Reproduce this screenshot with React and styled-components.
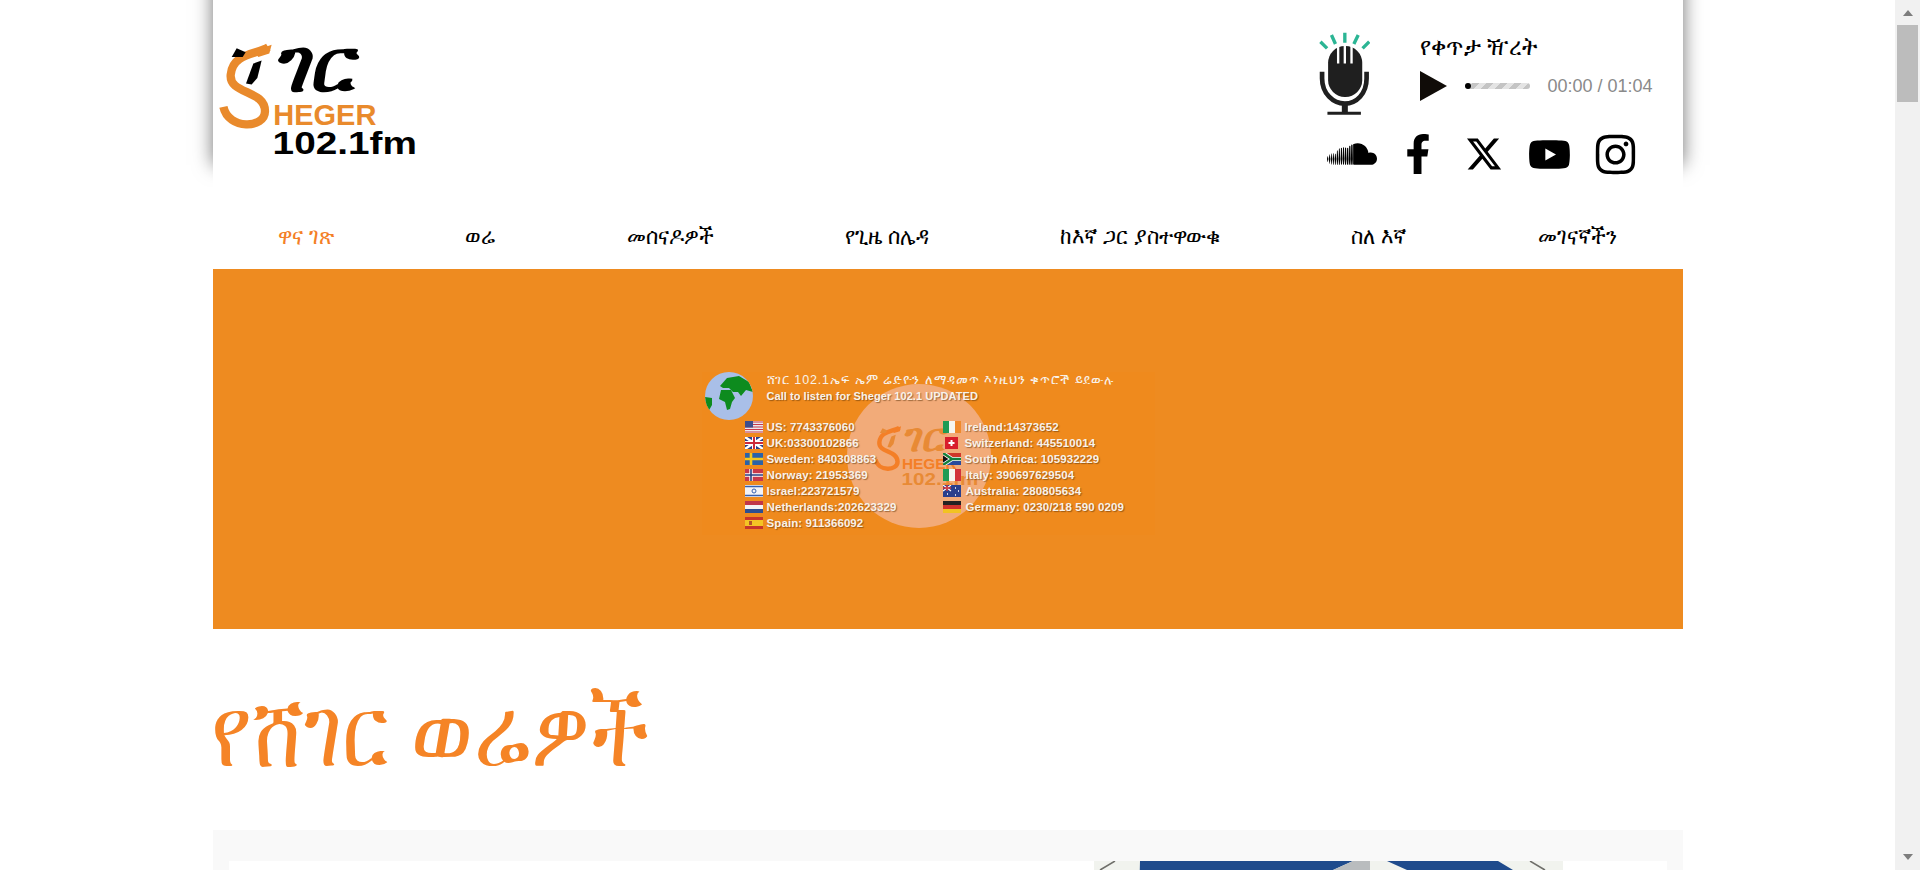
import React from "react";
import styled, { createGlobalStyle } from "styled-components";
import { FaFacebookF, FaSoundcloud, FaYoutube, FaInstagram } from "react-icons/fa";
import { FaXTwitter } from "react-icons/fa6";

const ORANGE = "#f47f27";
const LOGO_ORANGE = "#e98a2c";

const GlobalStyle = createGlobalStyle`
  body {
    margin: 0;
    padding-right: 25px;
    background: #fff;
    color: #000;
    font-family: "Liberation Sans", Arial, sans-serif;
  }
`;

const Page = styled.div`
  width: 1470px;
  margin: 0 auto;
`;

const Header = styled.header`
  position: relative;
  height: 190px;
  display: flex;
  justify-content: space-between;
  background: #fff;
  box-shadow: 0 -25px 18px rgba(0, 0, 0, 0.55);
`;

const LogoBox = styled.div`
  padding-top: 33px;
  svg {
    display: block;
    overflow: visible;
  }
`;

const HeaderRight = styled.div`
  width: 365px;
  padding-top: 30px;
`;

const PlayerRow = styled.div`
  display: flex;
  gap: 50px;
`;

const Player = styled.div`
  display: flex;
  flex-direction: column;
`;

const LiveTitle = styled.div`
  font-size: 23px;
  line-height: 30px;
  margin-top: 1px;
  transform: scaleY(1.1);
  transform-origin: left center;
`;

const Controls = styled.div`
  display: flex;
  align-items: center;
  height: 32px;
  margin-top: 9px;
`;

const PlayIcon = styled.svg`
  width: 27px;
  height: 30px;
  fill: #100c08;
`;

const Track = styled.div`
  position: relative;
  width: 65px;
  height: 6px;
  margin-left: 18px;
  border-radius: 3px;
  background: repeating-linear-gradient(
    -45deg,
    #c4c4c4 0 5px,
    #e4e4e4 5px 10px
  );
`;

const Knob = styled.span`
  position: absolute;
  left: 0;
  top: 0;
  width: 6px;
  height: 6px;
  border-radius: 50%;
  background: #000;
`;

const Time = styled.span`
  margin-left: 18px;
  font-size: 18px;
  color: #8a8a8a;
  white-space: nowrap;
`;

const Socials = styled.div`
  display: flex;
  margin: 15px 0 0 1px;
`;

const SocialCell = styled.a`
  width: 66px;
  height: 44px;
  display: flex;
  align-items: center;
  justify-content: center;
  color: #000;
`;

const Nav = styled.nav`
  position: relative;
  height: 79px;
  padding-top: 13px;
  box-sizing: border-box;
  display: flex;
  justify-content: space-around;
  align-items: center;
  background: #fff;
`;

const NavLink = styled.a`
  display: inline-block;
  font-size: 21.3px;
  color: ${(p) => (p.$active ? ORANGE : "#000")};
  transform: scaleY(1.1);
`;

const Banner = styled.section`
  height: 360px;
  padding: 9px 39px 0 0;
  box-sizing: border-box;
  display: flex;
  align-items: center;
  justify-content: center;
  background: #ee8b20;
`;

const Poster = styled.div`
  position: relative;
  width: 453px;
  height: 163px;
  background: #ef8a1d;
  color: #f8f2ea;
`;

const Disc = styled.div`
  position: absolute;
  left: 145px;
  top: 12px;
  width: 144px;
  height: 144px;
  border-radius: 50%;
  background: #f2ab79;
`;

const Watermark = styled.div`
  position: absolute;
  left: 168px;
  top: 48px;
  svg {
    overflow: visible;
  }
`;

const PosterHead = styled.div`
  position: relative;
  display: flex;
  gap: 14px;
  padding-left: 3px;
  height: 47px;
`;

const PosterTitles = styled.div`
  padding-top: 1px;
`;

const PosterTitle = styled.div`
  font-size: 12.5px;
  line-height: 15px;
  letter-spacing: 0.85px;
  white-space: nowrap;
`;

const PosterSub = styled.div`
  font-size: 11px;
  line-height: 16px;
  font-weight: 700;
  letter-spacing: 0.05px;
  white-space: nowrap;
  text-shadow: 1px 1px 1px rgba(90, 50, 10, 0.55);
`;

const Numbers = styled.div`
  position: relative;
  display: grid;
  grid-template-columns: 198px 1fr;
  padding-left: 43px;
`;

const NumberRow = styled.div`
  display: flex;
  align-items: center;
  height: 16px;
  font-size: 11.5px;
  font-weight: 700;
  letter-spacing: 0.1px;
  white-space: nowrap;
  text-shadow: 1px 1px 1px rgba(90, 50, 10, 0.55);
  svg {
    flex: none;
    margin-right: ${(p) => (p.$wide ? 5 : 4)}px;
  }
`;

const Heading = styled.h1`
  margin: 0;
  height: 201px;
  padding: 35px 0 0 0;
  box-sizing: border-box;
  font-size: 83.5px;
  line-height: 100px;
  font-weight: 400;
  color: #f58426;
  transform: scaleY(1.2);
  transform-origin: left top;
  text-indent: -2px;
`;

const NewsPanel = styled.section`
  padding: 31px 16px 16px;
  background: #f9f9f9;
`;

const NewsCard = styled.article`
  height: 320px;
  display: flex;
  justify-content: flex-end;
  padding-right: 97px;
  background: #fff;
  svg {
    display: block;
  }
`;

const Scrollbar = styled.div`
  position: fixed;
  top: 0;
  right: 0;
  bottom: 0;
  width: 25px;
  display: flex;
  flex-direction: column;
  justify-content: space-between;
  align-items: center;
  background: #f1f1f1;
`;

const ScrollArrow = styled.div`
  width: 0;
  height: 0;
  margin: 10px 0;
  border-left: 5.5px solid transparent;
  border-right: 5.5px solid transparent;
  ${(p) => (p.$down ? "border-top" : "border-bottom")}: 6px solid #7d7d7d;
`;

const ScrollThumb = styled.div`
  width: 21px;
  height: 77px;
  margin-top: -1px;
  background: #bcbcbc;
`;

const ScrollTop = styled.div`
  display: flex;
  flex-direction: column;
  align-items: center;
`;

function Logo({ width = 213, height = 133, accent = LOGO_ORANGE, ink = "#000" }) {
  return (
    <svg width={width} height={height} viewBox="39 100 640 400">
      <path
        d="M205 143C170 165 98 160 92 225C86 285 195 270 195 335C195 388 85 392 70 322"
        fill="none"
        stroke={accent}
        strokeWidth="25"
      />
      <path d="M160 155L215 135L208 162L175 172Z" fill={accent} />
      <path d="M95 172L110 146L137 158L128 172Z" fill={ink} />
      <path d="M138 252L160 192L185 183L172 235L155 255Z" fill={ink} />
      <g transform="translate(218 275) skewX(-10) scale(1 1.5)">
        <text fontSize="150" fontWeight="700" fontFamily="'Liberation Sans', sans-serif" fill={ink} textLength="240" lengthAdjust="spacingAndGlyphs">
          ገር
        </text>
      </g>
      <text x="220" y="378" fontSize="88" fontWeight="700" fontFamily="'Liberation Sans', sans-serif" fill={accent} textLength="310" lengthAdjust="spacingAndGlyphs">
        HEGER
      </text>
      <text x="218" y="465" fontSize="96" fontWeight="700" fontFamily="'Liberation Sans', sans-serif" fill={ink} textLength="434" lengthAdjust="spacingAndGlyphs">
        102.1fm
      </text>
    </svg>
  );
}

function Mic() {
  return (
    <svg width="52" height="87" viewBox="50 30 155 260">
      <g stroke="#2bb594" strokeWidth="10">
        <path d="M57 65L77 85M90 45L102 72M130 38V68M170 45L157 72M203 65L183 85" />
      </g>
      <rect x="80" y="78" width="102" height="152" rx="50" fill="#1f1f1f" />
      <path d="M110 76V130M130 76V130M150 76V130" stroke="#fff" strokeWidth="7" />
      <path d="M62 155V175C62 220 95 250 130 250C165 250 195 220 195 175V155" fill="none" stroke="#1f1f1f" strokeWidth="14" />
      <path d="M130 245V278" stroke="#1f1f1f" strokeWidth="18" />
      <path d="M78 279H178" stroke="#1f1f1f" strokeWidth="9" />
    </svg>
  );
}

function Globe() {
  return (
    <svg width="48" height="48" viewBox="0 0 48 48">
      <defs>
        <clipPath id="globe-clip">
          <circle cx="24" cy="24" r="24" />
        </clipPath>
      </defs>
      <circle cx="24" cy="24" r="24" fill="#a9bfe8" />
      <g clipPath="url(#globe-clip)" fill="#0d8b1e">
        <path d="M15 14L22 6L34 4L44 10L48 20L41 18L36 24L33 20L28 20L24 16L18 16Z" />
        <path d="M16 18L26 18L30 26L27 30L25 37L22 38L20 30L14 27Z" />
        <path d="M0 25L7 26L7 33L3 40L1 36Z" />
      </g>
    </svg>
  );
}

const flags = {
  us: (
    <>
      <rect width="18" height="12" fill="#e9e9ef" />
      <path d="M0 1H18M0 3.5H18M0 6H18M0 8.5H18M0 11H18" stroke="#c8384a" strokeWidth="1.2" />
      <rect width="8" height="6.5" fill="#3d4d8c" />
    </>
  ),
  uk: (
    <>
      <rect width="18" height="12" fill="#28408c" />
      <path d="M0 0L18 12M18 0L0 12" stroke="#fff" strokeWidth="2.4" />
      <path d="M9 0V12M0 6H18" stroke="#fff" strokeWidth="4" />
      <path d="M9 0V12M0 6H18" stroke="#cc2a3a" strokeWidth="2" />
    </>
  ),
  se: (
    <>
      <rect width="18" height="12" fill="#2a62a8" />
      <path d="M6 0V12M0 6H18" stroke="#f4c81e" strokeWidth="2.6" />
    </>
  ),
  no: (
    <>
      <rect width="18" height="12" fill="#c8384a" />
      <path d="M6 0V12M0 6H18" stroke="#fff" strokeWidth="3.4" />
      <path d="M6 0V12M0 6H18" stroke="#2a3f80" strokeWidth="1.6" />
    </>
  ),
  il: (
    <>
      <rect width="18" height="12" fill="#f3f3f6" />
      <path d="M0 1.5H18M0 10.5H18" stroke="#3660b0" strokeWidth="1.6" />
      <circle cx="9" cy="6" r="2" fill="none" stroke="#3660b0" />
    </>
  ),
  nl: (
    <>
      <rect width="18" height="4" fill="#c0364a" />
      <rect y="4" width="18" height="4" fill="#f3f3f6" />
      <rect y="8" width="18" height="4" fill="#2d4f92" />
    </>
  ),
  es: (
    <>
      <rect width="18" height="12" fill="#c8352a" />
      <rect y="3" width="18" height="6" fill="#f4c425" />
      <rect x="4" y="4" width="3" height="4" fill="#b5542a" />
    </>
  ),
  ie: (
    <>
      <rect width="6" height="12" fill="#1f9b54" />
      <rect x="6" width="6" height="12" fill="#f6f6f0" />
      <rect x="12" width="6" height="12" fill="#f08a2c" />
    </>
  ),
  ch: (
    <>
      <rect x="2" width="13" height="12" fill="#d81e2c" />
      <path d="M8.5 3V9M5.5 6H11.5" stroke="#fff" strokeWidth="2" />
    </>
  ),
  za: (
    <>
      <rect width="18" height="6" fill="#d0382a" />
      <rect y="6" width="18" height="6" fill="#2a4a9c" />
      <path d="M0 0L9 6L0 12M9 6H18" stroke="#fff" strokeWidth="4" fill="none" />
      <path d="M0 0L9 6L0 12M9 6H18" stroke="#15803d" strokeWidth="2.4" fill="none" />
      <path d="M0 2.5L5 6L0 9.5Z" fill="#111" />
    </>
  ),
  it: (
    <>
      <rect width="6" height="12" fill="#1f9b54" />
      <rect x="6" width="6" height="12" fill="#f6f6f0" />
      <rect x="12" width="6" height="12" fill="#d2333a" />
    </>
  ),
  au: (
    <>
      <rect width="18" height="12" fill="#2a3f8c" />
      <path d="M0 0L8 6M8 0L0 6" stroke="#fff" strokeWidth="1.2" />
      <path d="M4 0V6M0 3H8" stroke="#d2333a" strokeWidth="1.4" />
      <path d="M4 9H5M12 3H13M15 6H16M12 10H13" stroke="#fff" strokeWidth="1.4" />
    </>
  ),
  de: (
    <>
      <rect width="18" height="4" fill="#222" />
      <rect y="4" width="18" height="4" fill="#d0322c" />
      <rect y="8" width="18" height="4" fill="#f2c322" />
    </>
  ),
};

function Flag({ code }) {
  return (
    <svg width="18" height="12" viewBox="0 0 18 12">
      {flags[code]}
    </svg>
  );
}

const navItems = ["ዋና ገጽ", "ወሬ", "መሰናዶዎች", "የጊዜ ሰሌዳ", "ከእኛ ጋር ያስተዋውቁ", "ስለ እኛ", "መገናኛችን"];

const numbersLeft = [
  ["us", "US: 7743376060"],
  ["uk", "UK:03300102866"],
  ["se", "Sweden: 840308863"],
  ["no", "Norway: 21953369"],
  ["il", "Israel:223721579"],
  ["nl", "Netherlands:202623329"],
  ["es", "Spain: 911366092"],
];

const numbersRight = [
  ["ie", "Ireland:14373652"],
  ["ch", "Switzerland: 445510014"],
  ["za", "South Africa: 105932229"],
  ["it", "Italy: 390697629504", true],
  ["au", "Australia: 280805634", true],
  ["de", "Germany: 0230/218 590 0209", true],
];

function NumberColumn({ rows }) {
  return (
    <div>
      {rows.map(([code, text, wide]) => (
        <NumberRow key={code} $wide={wide}>
          <Flag code={code} />
          {text}
        </NumberRow>
      ))}
    </div>
  );
}

export default function App() {
  return (
    <Page>
      <GlobalStyle />
      <Header>
        <LogoBox>
          <Logo />
        </LogoBox>
        <HeaderRight>
          <PlayerRow>
            <Mic />
            <Player>
              <LiveTitle>የቀጥታ ዥረት</LiveTitle>
              <Controls>
                <PlayIcon viewBox="0 0 27 30">
                  <path d="M0 0L27 15L0 30Z" />
                </PlayIcon>
                <Track>
                  <Knob />
                </Track>
                <Time>00:00 / 01:04</Time>
              </Controls>
            </Player>
          </PlayerRow>
          <Socials>
            <SocialCell>
              <FaSoundcloud size={50} />
            </SocialCell>
            <SocialCell>
              <FaFacebookF size={40} />
            </SocialCell>
            <SocialCell>
              <FaXTwitter size={38} />
            </SocialCell>
            <SocialCell>
              <FaYoutube size={43} />
            </SocialCell>
            <SocialCell>
              <FaInstagram size={45} />
            </SocialCell>
          </Socials>
        </HeaderRight>
      </Header>
      <Nav>
        {navItems.map((item, i) => (
          <NavLink key={item} $active={i === 0}>
            {item}
          </NavLink>
        ))}
      </Nav>
      <Banner>
        <Poster>
          <Disc />
          <Watermark>
            <Logo width={113} height={71} accent={ORANGE} ink="#e88a35" />
          </Watermark>
          <PosterHead>
            <Globe />
            <PosterTitles>
              <PosterTitle>ሸገር 102.1ኤፍ ኤም ሬድዮን ለማዳመጥ እነዚህን ቁጥሮች ይደውሉ</PosterTitle>
              <PosterSub>Call to listen for Sheger 102.1 UPDATED</PosterSub>
            </PosterTitles>
          </PosterHead>
          <Numbers>
            <NumberColumn rows={numbersLeft} />
            <NumberColumn rows={numbersRight} />
          </Numbers>
        </Poster>
      </Banner>
      <Heading>የሸገር ወሬዎች</Heading>
      <NewsPanel>
        <NewsCard>
          <svg width="480" height="320" viewBox="0 0 480 320">
            <rect x="4" width="469" height="320" fill="#f1f3ee" />
            <path d="M50 0H263L243 9L180 320H42Z" fill="#1f4b8c" />
            <path d="M263 0H280V320H180L243 9Z" fill="#b9bcbe" />
            <path d="M297 0H408L423 9L470 320H330L317 9Z" fill="#1f4b8c" />
            <path d="M25 0L10 9M440 0L455 9" stroke="#6f6f6a" strokeWidth="1.5" />
          </svg>
        </NewsCard>
      </NewsPanel>
      <Scrollbar>
        <ScrollTop>
          <ScrollArrow />
          <ScrollThumb />
        </ScrollTop>
        <ScrollArrow $down />
      </Scrollbar>
    </Page>
  );
}
